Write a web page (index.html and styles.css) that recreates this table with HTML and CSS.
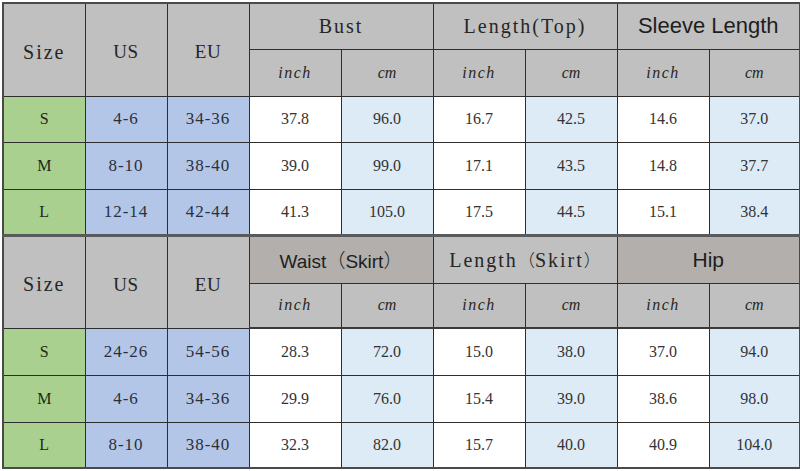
FILE: index.html
```html
<!DOCTYPE html>
<html>
<head>
<meta charset="utf-8">
<link rel="stylesheet" href="styles.css">
</head>
<body>
<table class="chart">
  <colgroup>
    <col class="c-s"><col class="c-s"><col class="c-s">
    <col class="c-m"><col class="c-m"><col class="c-m"><col class="c-m"><col class="c-m"><col class="c-l">
  </colgroup>
  <tbody>
    <tr class="h1">
      <th rowspan="2" class="hd lab wide tall">Size</th>
      <th rowspan="2" class="hd lab tall">US</th>
      <th rowspan="2" class="hd lab tall">EU</th>
      <th colspan="2" class="hd lab wide">Bust</th>
      <th colspan="2" class="hd lab wide">Length(Top)</th>
      <th colspan="2" class="hd sans">Sleeve Length</th>
    </tr>
    <tr class="h2">
      <th class="hd unit inch">inch</th><th class="hd unit">cm</th>
      <th class="hd unit inch">inch</th><th class="hd unit">cm</th>
      <th class="hd unit inch">inch</th><th class="hd unit">cm</th>
    </tr>
    <tr class="r1">
      <td class="sz">S</td><td class="rg">4-6</td><td class="rg">34-36</td>
      <td class="num">37.8</td><td class="num lb">96.0</td>
      <td class="num">16.7</td><td class="num lb">42.5</td>
      <td class="num">14.6</td><td class="num lb">37.0</td>
    </tr>
    <tr class="r2">
      <td class="sz">M</td><td class="rg">8-10</td><td class="rg">38-40</td>
      <td class="num">39.0</td><td class="num lb">99.0</td>
      <td class="num">17.1</td><td class="num lb">43.5</td>
      <td class="num">14.8</td><td class="num lb">37.7</td>
    </tr>
    <tr class="r3 sect-end">
      <td class="sz">L</td><td class="rg">12-14</td><td class="rg">42-44</td>
      <td class="num">41.3</td><td class="num lb">105.0</td>
      <td class="num">17.5</td><td class="num lb">44.5</td>
      <td class="num">15.1</td><td class="num lb">38.4</td>
    </tr>
    <tr class="h3">
      <th rowspan="2" class="hd lab wide tall">Size</th>
      <th rowspan="2" class="hd lab tall">US</th>
      <th rowspan="2" class="hd lab tall">EU</th>
      <th colspan="2" class="hd dark sans waist">Waist<span class="fw">（</span>Skirt<span class="fw">）</span></th>
      <th colspan="2" class="hd lab skirt">Length<span class="fw">（</span>Skirt<span class="fw">）</span></th>
      <th colspan="2" class="hd dark sans hip">Hip</th>
    </tr>
    <tr class="h4">
      <th class="hd unit inch">inch</th><th class="hd unit">cm</th>
      <th class="hd unit inch">inch</th><th class="hd unit">cm</th>
      <th class="hd unit inch">inch</th><th class="hd unit">cm</th>
    </tr>
    <tr class="r4">
      <td class="sz">S</td><td class="rg">24-26</td><td class="rg">54-56</td>
      <td class="num">28.3</td><td class="num lb">72.0</td>
      <td class="num">15.0</td><td class="num lb">38.0</td>
      <td class="num">37.0</td><td class="num lb">94.0</td>
    </tr>
    <tr class="r5">
      <td class="sz">M</td><td class="rg">4-6</td><td class="rg">34-36</td>
      <td class="num">29.9</td><td class="num lb">76.0</td>
      <td class="num">15.4</td><td class="num lb">39.0</td>
      <td class="num">38.6</td><td class="num lb">98.0</td>
    </tr>
    <tr class="r6">
      <td class="sz">L</td><td class="rg">8-10</td><td class="rg">38-40</td>
      <td class="num">32.3</td><td class="num lb">82.0</td>
      <td class="num">15.7</td><td class="num lb">40.0</td>
      <td class="num">40.9</td><td class="num lb">104.0</td>
    </tr>
  </tbody>
</table>
</body>
</html>
```

FILE: styles.css
```css
html, body {
  margin: 0;
  padding: 0;
  background: #ffffff;
}

body {
  padding: 2px 0 0 2px;
}

.chart {
  border-collapse: collapse;
  table-layout: fixed;
  width: 797px;
  border: 2px solid #4a4a4a;
  font-family: "Liberation Serif", "Noto Sans CJK SC", serif;
  color: #262626;
}

.c-s { width: 82px; }
.c-m { width: 92px; }
.c-l { width: 91px; }

.chart th,
.chart td {
  border: 1px solid #2e2e2e;
  padding: 0;
  text-align: center;
  vertical-align: middle;
  font-weight: normal;
  overflow: hidden;
  white-space: nowrap;
}

.h1 { height: 46px; }
.h2 { height: 47px; }
.r1 { height: 46px; }
.r2 { height: 47px; }
.r3 { height: 46px; }
.h3 { height: 48px; }
.h4 { height: 45px; }
.r4 { height: 47px; }
.r5 { height: 47px; }
.r6 { height: 46px; }

.sect-end td {
  border-bottom: 3px solid #5a5a5a;
}

.h4 th {
  border-bottom: 2px solid #3a3a3a;
}

.hd {
  background: #c0c0c0;
}

.hd.dark {
  background: #b2afad;
}

.lab {
  font-size: 19px;
  letter-spacing: 0.5px;
  padding-top: 2px;
}

.lab.wide {
  font-size: 20px;
  letter-spacing: 2px;
}

.lab.tall {
  padding-top: 5px;
}

.skirt {
  font-size: 20px;
  letter-spacing: 2px;
  padding-left: 4px;
}

.sans {
  font-family: "Liberation Sans", "Noto Sans CJK JP", sans-serif;
  font-size: 22px;
  color: #1e1e1e;
  padding-top: 2px;
}

.waist {
  font-size: 19px;
}

.hip {
  font-size: 21px;
}

.fw {
  font-family: "Noto Sans CJK JP", sans-serif;
  font-weight: 300;
  letter-spacing: 0;
}

.skirt .fw {
  font-size: 17px;
}

.unit {
  font-style: italic;
  font-size: 16px;
  padding-top: 2px;
}

.unit.inch {
  letter-spacing: 1.5px;
}

.sz {
  background: #a9d08e;
  font-size: 16px;
  color: #1f2a16;
}

.rg {
  background: #b4c6e7;
  font-size: 17px;
  letter-spacing: 1px;
  color: #2a2f3a;
}

.num {
  background: #ffffff;
  font-size: 16px;
  color: #333333;
}

.num.lb {
  background: #ddebf7;
}
```
